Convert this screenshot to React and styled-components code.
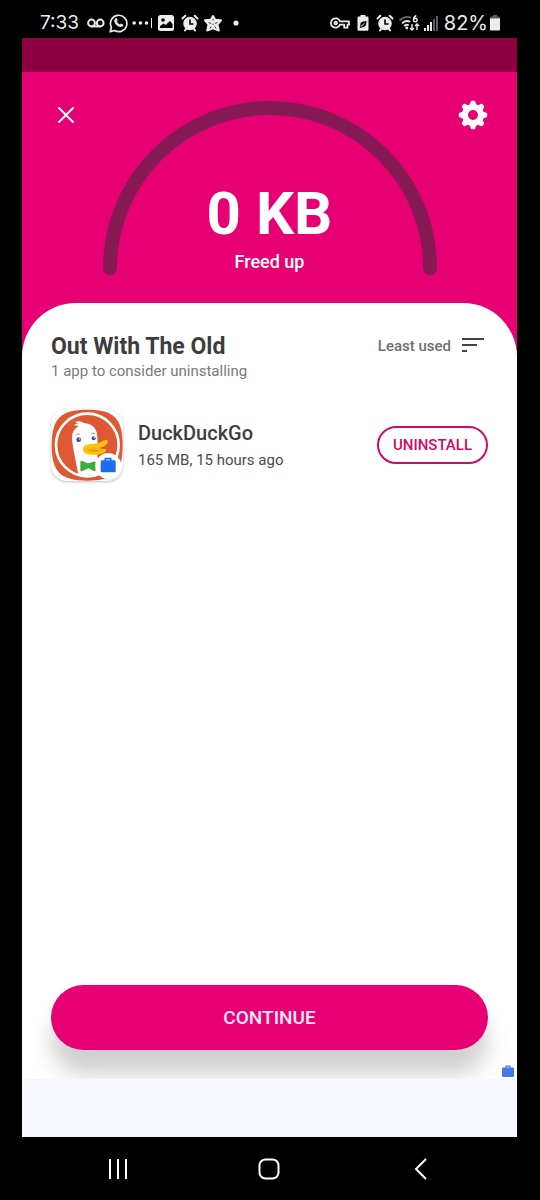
import React from 'react';
import styled, { createGlobalStyle } from "styled-components";

const GlobalStyle = createGlobalStyle`
  * {
    box-sizing: border-box;
  }
  body {
    margin: 0;
    background: #000;
    font-family: Roboto, "Liberation Sans", sans-serif;
  }
  button {
    font-family: inherit;
    border: none;
    background: none;
    padding: 0;
    cursor: pointer;
  }
  svg {
    display: block;
    flex-shrink: 0;
  }
`

const Phone = styled.div`
  display: flex;
  flex-direction: column;
  min-height: 100vh;
  background: #000;
`

const StatusBar = styled.header`
  display: flex;
  justify-content: space-between;
  align-items: center;
  height: 38px;
  padding: 8px 39px 0 40px;
  color: #ececec;
`

const StatusGroup = styled.div`
  display: flex;
  align-items: center;
  gap: ${(props) => props.$gap || 4}px;
`

const StatusText = styled.span`
  font-family: Inter, Roboto, sans-serif;
  font-size: ${(props) => props.$size || 19}px;
  line-height: 24px;
  padding-right: ${(props) => props.$space || 0}px;
`

const Screen = styled.main`
  flex: 1;
  display: flex;
  flex-direction: column;
  margin: 0 23px 0 22px;
  background: #e70074;
`

const TopStrip = styled.div`
  height: 34px;
  background: #8c0041;
`

const Hero = styled.section`
  display: flex;
  justify-content: space-between;
  align-items: flex-start;
  padding: 28px 29px;
  color: #fff;
`

const IconButton = styled.button`
  display: flex;
  justify-content: center;
  align-items: center;
  width: 30px;
  height: 30px;
  color: #fff;
`

const Gauge = styled.div`
  display: grid;
  justify-items: center;

  > * {
    grid-area: 1 / 1;
  }
`

const GaugeLabel = styled.div`
  align-self: end;
  text-align: center;
`

const Amount = styled.h1`
  margin: 0;
  font-size: 60px;
  line-height: 70px;
  font-weight: 700;
`

const Caption = styled.p`
  margin: 0;
  font-size: 18px;
  line-height: 26px;
  font-weight: 500;
`

const Sheet = styled.section`
  position: relative;
  flex: 1;
  display: flex;
  flex-direction: column;
  padding: 30px 29px 29px;
  border-radius: 54px 54px 0 0;
  background: #fff;
  overflow: hidden;
`

const SheetHeader = styled.div`
  display: flex;
  justify-content: space-between;
  align-items: flex-start;
`

const Title = styled.h2`
  margin: 0;
  font-size: 23px;
  line-height: 28px;
  font-weight: 700;
  color: #3d3d3d;
`

const Subtitle = styled.p`
  margin: 0;
  font-size: 15px;
  line-height: 20px;
  color: #7a7a7a;
`

const SortButton = styled.button`
  display: flex;
  align-items: center;
  gap: 11px;
  padding-right: 4px;
  font-size: 15px;
  line-height: 26px;
  font-weight: 500;
  color: #6f6f6f;
`

const AppList = styled.ul`
  flex: 1;
  list-style: none;
  margin: 28px 0 0;
  padding: 0;
`

const AppRow = styled.li`
  display: flex;
  align-items: center;
`

const AppIcon = styled.div`
  border-radius: 16px;
  background: #fff;
  box-shadow: 0 1px 3px rgba(0, 0, 0, 0.25);
  overflow: hidden;
`

const AppInfo = styled.div`
  flex: 1;
  padding: 2px 0 0 15px;
`

const AppName = styled.h3`
  margin: 0;
  font-size: 20px;
  line-height: 28px;
  font-weight: 500;
  color: #3d3d3d;
`

const AppDetail = styled.p`
  margin: 0;
  font-size: 15px;
  line-height: 26px;
  color: #4a4a4a;
`

const UninstallButton = styled.button`
  height: 38px;
  width: 111px;
  border: 2px solid #cc0a6c;
  border-radius: 19px;
  font-size: 15px;
  font-weight: 500;
  color: #cc0a6c;
`

const ContinueButton = styled.button`
  height: 65px;
  border-radius: 33px;
  background: #e70074;
  box-shadow: 0 24px 22px rgba(0, 0, 0, 0.19);
  font-size: 19px;
  font-weight: 500;
  color: #ffe9f4;
`

const WorkBadge = styled.div`
  position: absolute;
  right: 3px;
  bottom: 2px;
`

const BottomStrip = styled.div`
  height: 58px;
  background: #f6f7ff;
`

const NavBar = styled.nav`
  display: grid;
  grid-template-columns: repeat(3, 1fr);
  height: 63px;
  padding: 0 43px 0 42px;
`

const NavButton = styled.button`
  display: flex;
  justify-content: center;
  align-items: center;
  color: #fff;
`

const VoicemailIcon = () => (
  <svg width="18" height="20" viewBox="0 0 18 20" fill="none" stroke="currentColor" strokeWidth="2">
    <circle cx="4.5" cy="10" r="3.4" />
    <circle cx="13.2" cy="10" r="3.4" />
    <path d="M4.5 13.4h8.7" />
  </svg>
)

const WhatsappIcon = () => (
  <svg width="19" height="20" viewBox="0 0 19 20" fill="none" stroke="currentColor">
    <path strokeWidth="1.7" strokeLinejoin="round" d="M1.2 18.8l1.2-4.6a8.2 8.2 0 1 1 3.1 3.3z" />
    <path fill="currentColor" stroke="none" d="M6.6 5.2c.5-.3 1-.2 1.2.3l.8 1.8c.1.4-.5 1-.7 1.3.7 1.4 1.7 2.3 3.1 2.9.4-.4.9-1.2 1.3-1l1.8.9c.4.2.3.9 0 1.4-.6 1-2 1.4-3.1 1.1-3-.8-5-2.8-5.7-5.500-.2-1.200.3-2.500 1.300-3.200z" />
  </svg>
)

const DotsIcon = () => (
  <svg width="20" height="20" viewBox="0 0 20 20" fill="currentColor">
    <circle cx="2.2" cy="10" r="1.8" />
    <circle cx="8.5" cy="10" r="1.8" />
    <circle cx="14.500" cy="10" r="1.8" />
    <rect x="19" y="5" width="1" height="10" />
  </svg>
)

const PictureIcon = () => (
  <svg width="20" height="20" viewBox="0 0 20 20">
    <rect x="2" y="2" width="16" height="16" rx="2.5" fill="currentColor" />
    <circle cx="7" cy="7" r="1.8" fill="#000" />
    <path d="M4 15v-2l3.5-2.5 2 1.5L14 8l2.5 3v4z" fill="#000" />
  </svg>
)

const AlarmIcon = ({ width = 20 }) => (
  <svg width={width} height="20" viewBox={`${(20 - width) / 2} 0 ${width} 20`} fill="none" stroke="currentColor">
    <circle cx="10" cy="10.5" r="6.8" fill="currentColor" stroke="none" />
    <path strokeWidth="2" strokeLinecap="round" d="M2.5 5.5l2.8-2.7M17.5 5.5l-2.8-2.7M5 17.5l1-1.5M15 17.5l-1-1.5" />
    <path stroke="#000" strokeWidth="1.6" d="M10 6.500v4.500h3.500" />
  </svg>
)

const StarIcon = () => (
  <svg width="18" height="20" viewBox="0 0 18 20">
    <path fill="currentColor" stroke="currentColor" strokeWidth="2" strokeLinejoin="round" d="M9 3l2.200 3.800 5.800.5-3.600 4.200 1.400 6L9 15.200l-5.800 2.300 1.400-6L1 7.300l5.800-.5z" />
    <path fill="none" stroke="#444" strokeWidth="1" d="M4.500 9.500l2.500 1M9 5.500v2M13.500 9.500l-2.500 1M7 13.500l-1 2M11 13.500l1 2M9 10.500v1.500" />
  </svg>
)

const DotIcon = () => (
  <svg width="20" height="20" viewBox="0 0 20 20" fill="currentColor">
    <circle cx="10" cy="10" r="2.6" />
  </svg>
)

const KeyIcon = () => (
  <svg width="20" height="20" viewBox="0 0 20 20" fill="none" stroke="currentColor" strokeWidth="1.8" strokeLinejoin="round">
    <path d="M10 8.300h9v3.400h-1.500v3h-3.300v-3H10a4.700 4.700 0 1 1 0-3.400z" />
    <circle cx="5.700" cy="10" r="1.300" />
  </svg>
)

const SaverIcon = () => (
  <svg width="18" height="20" viewBox="0 0 18 20">
    <path fill="currentColor" d="M6.500 2h5v1.500h1.700c.7 0 1.300.6 1.300 1.300v11.400c0 .9-.7 1.600-1.600 1.600H5.100c-.9 0-1.600-.7-1.600-1.600V4.800c0-.7.6-1.300 1.300-1.300h1.700z" />
    <path fill="#000" d="M12.500 8c0 4.500-1.500 6.500-4.200 6.300l-1.800.7-1-.7 1-1C5.500 9.700 8 8.200 12.500 8z" />
    <path fill="none" stroke="currentColor" d="M7 13.500l3.500-3.300" />
  </svg>
)

const WifiIcon = () => (
  <svg width="22" height="20" viewBox="0 0 22 20" fill="none" stroke="currentColor" strokeWidth="1.800">
    <path d="M1.500 7.500C5 4 9.500 3.300 13 4.300" opacity="0.45" />
    <path d="M4 10.300c2.500-2.500 5.500-2.800 8.200-1.500M6.200 13c1.300-1.300 3-1.600 4.600-.8" />
    <circle cx="8.800" cy="15" r="1.400" fill="currentColor" stroke="none" />
    <path strokeWidth="1.400" d="M18.300 2.500c-2 1-2.800 2.500-2.800 4.300" />
    <circle cx="17.300" cy="7" r="1.800" strokeWidth="1.400" />
    <path strokeWidth="1.400" d="M14 11v6M12 15l2 2 2-2M19 17v-6M17 13l2-2 2 2" />
  </svg>
)

const SignalIcon = () => (
  <svg width="16" height="20" viewBox="0 0 16 20" fill="currentColor">
    <rect x="0" y="15" width="2" height="3" />
    <rect x="3" y="12" width="2" height="6" />
    <rect x="6" y="9" width="2" height="9" />
    <rect x="9" y="6" width="2" height="12" opacity="0.4" />
    <rect x="12" y="3" width="2" height="15" opacity="0.4" />
  </svg>
)

const BatteryIcon = () => (
  <svg width="12" height="20" viewBox="0 0 12 20" fill="currentColor">
    <path opacity="0.4" d="M4 2h4v1.500h2c.6 0 1 .4 1 1V6H1V4.500c0-.6.4-1 1-1h2z" />
    <path d="M1 5.500h10v10.700c0 .8-.5 1.300-1.300 1.300H2.300c-.8 0-1.300-.5-1.300-1.300z" />
  </svg>
)

const GearIcon = () => (
  <svg width="30" height="30" viewBox="0 0 30 30">
    <circle cx="15" cy="15" r="8" fill="none" stroke="currentColor" strokeWidth="6" />
    {[0, 45, 90, 135, 180, 225, 270, 315].map((angle) => (
      <path
        key={angle}
        transform={`rotate(${angle} 15 15)`}
        fill="currentColor"
        d="M11.500 5.500l1.200-3.800c.2-.6.600-.9 1.100-.9h2.400c.5 0 .9.300 1.100.9l1.200 3.800z"
      />
    ))}
  </svg>
)

const SortIcon = () => (
  <svg width="22" height="18" viewBox="0 0 22 18" fill="#444">
    <rect x="0" y="1" width="22" height="2" />
    <rect x="0" y="7" width="15" height="2" />
    <rect x="0" y="13" width="5" height="2" />
  </svg>
)

const Briefcase = ({ size, color }) => (
  <svg width={size} height={size} viewBox="0 0 12 12">
    <path fill="none" stroke={color} strokeWidth="1.2" d="M4 3V1.200h4V3" />
    <rect x="0" y="2.5" width="12" height="9.5" rx="1.2" fill={color} />
  </svg>
)

const DuckLogo = () => (
  <svg width="72" height="72" viewBox="31 28 216 216">
    <path fill="#de5833" d="M33 137C33 56 60 30 140 30s106 26 106 107-26 106-106 106S33 218 33 137z" />
    <circle cx="140" cy="136" r="94" fill="none" stroke="#fff" strokeWidth="8" />
    <path fill="#fff" d="M113 226C107 186 95 145 94 114c0-18 8-29 20-33-5-3-9-4-14-4 3-4 7-5 12-5-2-2-6-3-10-4 9-6 20-4 28 2 22 2 36 14 39 32 3 20 1 38 1 58l4 68c-20 4-42 4-55-2z" />
    <circle cx="114" cy="120" r="7" fill="#394a80" />
    <circle cx="116" cy="118" r="2" fill="#fff" />
    <circle cx="159" cy="116" r="6" fill="#394a80" />
    <circle cx="161" cy="114" r="2" fill="#fff" />
    <path fill="none" stroke="#7382ad" strokeWidth="3" d="M105 107c3-4 8-5 12-3M152 103c4-3 7-3 10-1" />
    <path fill="#fdc20a" d="M127 150c0-12 12-17 30-17 17 0 25-9 38-12 8-1 8 8 1 14-7 6-14 8-21 10 7 4 14 4 21 2 4 8-10 16-25 18-20 2-44-1-44-15z" />
    <path fill="#f0a00a" d="M137 151c10-4 22-4 35-6-3 2-7 2-10 3 7 4 17 5 26 3-14 7-38 8-51 0z" />
    <path fill="#3cae3c" d="M119 188c0-4 3-5 7-3l15 6 18-5c4-1 6 1 6 4v20c0 4-4 5-7 3l-15-7-18 8c-4 2-6 0-6-4z" />
    <circle cx="203" cy="202" r="40" fill="#000" opacity="0.08" />
    <circle cx="203" cy="199" r="39" fill="#fff" />
    <path fill="none" stroke="#1a6cf0" strokeWidth="5" d="M194 184v-7h16v7" />
    <rect x="180" y="182" width="45" height="36" rx="4" fill="#1a6cf0" />
  </svg>
)

const apps = [
  { name: "DuckDuckGo", detail: "165 MB, 15 hours ago", Logo: DuckLogo }
]

function App() {
  return (
    <Phone>
      <GlobalStyle />
      <StatusBar>
        <StatusGroup>
          <StatusText $space={4}>7:33</StatusText>
          <VoicemailIcon />
          <WhatsappIcon />
          <DotsIcon />
          <PictureIcon />
          <AlarmIcon />
          <StarIcon />
          <DotIcon />
        </StatusGroup>
        <StatusGroup>
          <KeyIcon />
          <SaverIcon />
          <AlarmIcon width={18} />
          <WifiIcon />
          <SignalIcon />
          <StatusGroup $gap={1}>
            <StatusText $size={20}>82%</StatusText>
            <BatteryIcon />
          </StatusGroup>
        </StatusGroup>
      </StatusBar>

      <Screen>
        <TopStrip />
        <Hero>
          <IconButton aria-label="Close">
            <svg width="18" height="18" viewBox="0 0 18 18" stroke="currentColor" strokeWidth="2" strokeLinecap="round">
              <path d="M2 2l14 14M16 2L2 16" />
            </svg>
          </IconButton>
          <Gauge>
            <svg width="336" height="175" viewBox="0 0 336 175" fill="none">
              <path d="M8 168a160 160 0 0 1 320 0" stroke="#861a54" strokeWidth="14" strokeLinecap="round" />
            </svg>
            <GaugeLabel>
              <Amount>0 KB</Amount>
              <Caption>Freed up</Caption>
            </GaugeLabel>
          </Gauge>
          <IconButton aria-label="Settings">
            <GearIcon />
          </IconButton>
        </Hero>

        <Sheet>
          <SheetHeader>
            <div>
              <Title>Out With The Old</Title>
              <Subtitle>1 app to consider uninstalling</Subtitle>
            </div>
            <SortButton>
              Least used
              <SortIcon />
            </SortButton>
          </SheetHeader>
          <AppList>
            {apps.map(({ name, detail, Logo }) => (
              <AppRow key={name}>
                <AppIcon>
                  <Logo />
                </AppIcon>
                <AppInfo>
                  <AppName>{name}</AppName>
                  <AppDetail>{detail}</AppDetail>
                </AppInfo>
                <UninstallButton>UNINSTALL</UninstallButton>
              </AppRow>
            ))}
          </AppList>
          <ContinueButton>CONTINUE</ContinueButton>
          <WorkBadge>
            <Briefcase size={12} color="#4478e4" />
          </WorkBadge>
        </Sheet>
        <BottomStrip />
      </Screen>

      <NavBar>
        <NavButton aria-label="Recents">
          <svg width="22" height="22" viewBox="0 0 22 22" stroke="currentColor" strokeWidth="2">
            <path d="M3 1v20M11 1v20M19 1v20" />
          </svg>
        </NavButton>
        <NavButton aria-label="Home">
          <svg width="22" height="22" viewBox="0 0 22 22" fill="none" stroke="currentColor" strokeWidth="2">
            <rect x="1.5" y="1.5" width="19" height="19" rx="6" />
          </svg>
        </NavButton>
        <NavButton aria-label="Back">
          <svg width="22" height="22" viewBox="0 0 22 22" fill="none" stroke="currentColor" strokeWidth="2">
            <path d="M16 1L6 11l10 10" />
          </svg>
        </NavButton>
      </NavBar>
    </Phone>
  );
}

export default App;
